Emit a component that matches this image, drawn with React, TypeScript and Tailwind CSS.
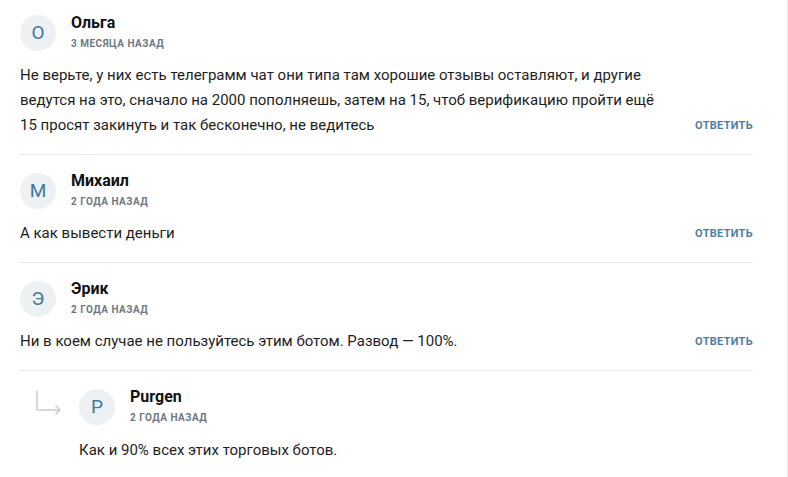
import React from "react";

type Comment = {
  initial: string;
  name: string;
  date: string;
  text: string;
  replies?: Comment[];
};

const comments: Comment[] = [
  {
    initial: "О",
    name: "Ольга",
    date: "3 месяца назад",
    text: "Не верьте, у них есть телеграмм чат они типа там хорошие отзывы оставляют, и другие ведутся на это, сначало на 2000 пополняешь, затем на 15, чтоб верификацию пройти ещё 15 просят закинуть и так бесконечно, не ведитесь",
  },
  {
    initial: "М",
    name: "Михаил",
    date: "2 года назад",
    text: "А как вывести деньги",
  },
  {
    initial: "Э",
    name: "Эрик",
    date: "2 года назад",
    text: "Ни в коем случае не пользуйтесь этим ботом. Развод — 100%.",
    replies: [
      {
        initial: "P",
        name: "Purgen",
        date: "2 года назад",
        text: "Как и 90% всех этих торговых ботов.",
      },
    ],
  },
];

const Header = ({ c }: { c: Comment }) => (
  <div className="flex items-start">
    <div className="w-9 h-9 rounded-full bg-[#edf1f4] flex items-center justify-center text-[19px] text-[#3f7899]">
      {c.initial}
    </div>
    <div className="ml-[15px] flex flex-col -mt-[2px]">
      <span className="text-[16px] font-bold leading-5 text-[#111]">{c.name}</span>
      <span className="mt-[5px] text-[10px] font-bold uppercase tracking-[0.5px] leading-3 text-[#6f7882]">
        {c.date}
      </span>
    </div>
  </div>
);

const ReplyArrow = () => (
  <svg width="28" height="26" viewBox="0 0 28 26" fill="none" className="mt-[1px] ml-[15px]">
    <path
      d="M2 1 V20 H25 M21 16 L25 20 L21 24"
      stroke="#c8cdd2"
      strokeWidth="1.5"
      strokeLinecap="round"
      strokeLinejoin="round"
    />
  </svg>
);

const App = () => {
  return (
    <div
      className="w-[788px] min-h-screen bg-white border-r border-[#eef0f2]"
      style={{ fontFamily: "Roboto, 'Liberation Sans', sans-serif" }}
    >
      <div className="w-[733px] ml-5">
        {comments.map((c, i) => (
          <div key={c.name}>
            <div
              className={`${i === 0 ? "pt-[15px] pb-4" : "pt-[18px] pb-4"} ${
                i < comments.length - 1 || c.replies ? "border-b border-[#ececec]" : ""
              }`}
            >
              <Header c={c} />
              <div className="mt-3 flex items-end justify-between">
                <p className="max-w-[650px] text-[15px] leading-[25px] text-[#1e1e1e]">{c.text}</p>
                <button className="text-[11px] font-bold uppercase tracking-[0.3px] text-[#4b7ea2] leading-[25px]">
                  Ответить
                </button>
              </div>
            </div>
            {c.replies?.map((r) => (
              <div key={r.name} className="flex pt-[18px] pb-4">
                <div className="w-[59px]">
                  <ReplyArrow />
                </div>
                <div className="flex-1">
                  <Header c={r} />
                  <p className="mt-[13px] text-[15px] leading-[25px] text-[#1e1e1e]">{r.text}</p>
                </div>
              </div>
            ))}
          </div>
        ))}
      </div>
    </div>
  );
};

export default App;
